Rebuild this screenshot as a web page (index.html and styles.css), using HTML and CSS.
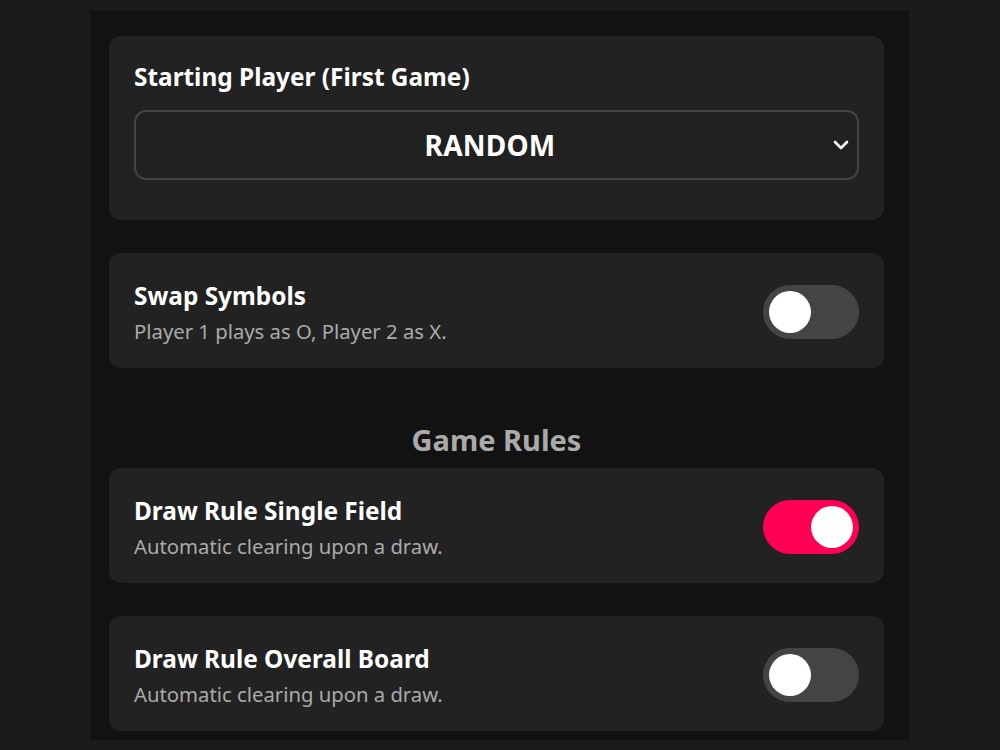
FILE: index.html
```html
<!DOCTYPE html>
<html lang="en">
<head>
<meta charset="utf-8">
<title>Settings</title>
<link rel="stylesheet" href="styles.css">
</head>
<body>
<main class="panel">
  <section class="card card-stack">
    <div class="card-title">Starting Player (First Game)</div>
    <div class="select">
      <span class="select-value">RANDOM</span>
      <svg class="chevron" width="16" height="10" viewBox="0 0 16 10"><path d="M2 2 L8 8 L14 2" fill="none" stroke="#fff" stroke-width="2.6" stroke-linecap="round" stroke-linejoin="round"/></svg>
    </div>
  </section>

  <section class="card card-row">
    <div class="text">
      <div class="card-title">Swap Symbols</div>
      <div class="card-desc">Player 1 plays as O, Player 2 as X.</div>
    </div>
    <div class="toggle"><span class="knob"></span></div>
  </section>

  <h2 class="section-title">Game Rules</h2>

  <section class="card card-row">
    <div class="text">
      <div class="card-title">Draw Rule Single Field</div>
      <div class="card-desc">Automatic clearing upon a draw.</div>
    </div>
    <div class="toggle on"><span class="knob"></span></div>
  </section>

  <section class="card card-row">
    <div class="text">
      <div class="card-title">Draw Rule Overall Board</div>
      <div class="card-desc">Automatic clearing upon a draw.</div>
    </div>
    <div class="toggle"><span class="knob"></span></div>
  </section>
</main>
</body>
</html>
```

FILE: styles.css
```css
* { box-sizing: border-box; }

html, body {
  margin: 0;
  padding: 0;
  background: #1b1b1b;
  height: 100%;
  overflow: hidden;
}

body {
  font-family: "Noto Sans", "Open Sans", sans-serif;
  color: #ffffff;
}

.panel {
  width: 819px;
  height: 730px;
  margin: 10px 0 0 90px;
  background: #121212;
  padding: 26px 25px 0 19px;
  overflow: hidden;
}

.card {
  background: #222222;
  border-radius: 12px;
  padding: 25px;
  margin-bottom: 33px;
}

.card-stack {
  padding-bottom: 40px;
}

.card-row {
  display: flex;
  align-items: center;
  justify-content: space-between;
  padding: 27px 25px 23px 25px;
}

.card-row .toggle {
  margin-top: -2px;
}

.card-title {
  font-size: 24.4px;
  font-weight: 700;
  line-height: 32px;
}

.card-desc {
  margin-top: 5px;
  font-size: 20.3px;
  line-height: 28px;
  color: #aaaaaa;
}

.select {
  margin-top: 17px;
  height: 70px;
  border: 2px solid #444444;
  border-radius: 12px;
  background: #212121;
  display: flex;
  align-items: center;
  justify-content: center;
  position: relative;
  padding: 0 26px 0 13px;
}

.select-value {
  font-size: 28px;
  font-weight: 700;
  letter-spacing: 0.2px;
}

.chevron {
  position: absolute;
  right: 8px;
  top: 28px;
}

.section-title {
  margin: 54px 0 10px 0;
  text-align: center;
  font-size: 29px;
  line-height: 36px;
  font-weight: 700;
  color: #aaaaaa;
}

.toggle {
  width: 96px;
  height: 54px;
  border-radius: 27px;
  background: #444444;
  padding: 6px;
  display: flex;
  flex-shrink: 0;
}

.toggle .knob {
  width: 42px;
  height: 42px;
  border-radius: 50%;
  background: #ffffff;
}

.toggle.on {
  background: #ff0055;
  justify-content: flex-end;
}
```
